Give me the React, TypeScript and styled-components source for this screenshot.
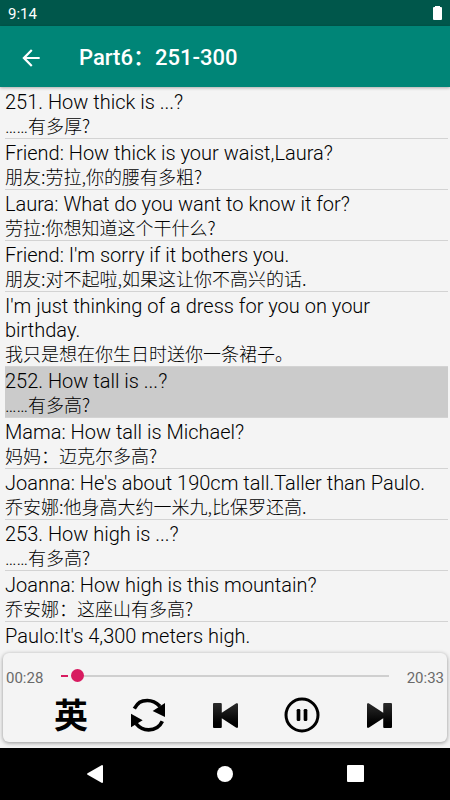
import React, { useState } from "react";
import styled, { createGlobalStyle } from "styled-components";

const GlobalStyle = createGlobalStyle`
  * { box-sizing: border-box; }
  body {
    margin: 0;
    background: #f4f4f4;
    font-family: Roboto, "Noto Sans CJK SC", sans-serif;
    color: #000;
  }
  button { border: 0; padding: 0; background: none; color: inherit; cursor: pointer; }
  svg { display: block; }
`;

const Screen = styled.div`
  display: flex;
  flex-direction: column;
  height: 100vh;
`;

const StatusBar = styled.div`
  flex: none;
  display: flex;
  align-items: center;
  justify-content: space-between;
  height: 26px;
  padding: 1px 8px 0;
  background: #00574b;
  color: #fff;
  font-size: 15px;
  line-height: 24px;
`;

const AppBar = styled.header`
  flex: none;
  display: flex;
  align-items: center;
  gap: 35px;
  height: 61px;
  padding: 2px 18px 0;
  background: #008577;
  color: #fff;
  box-shadow: 0 1px 3px rgba(0, 0, 0, 0.3);
  z-index: 1;
`;

const BackButton = styled.button`
  width: 26px;
  height: 26px;
`;

const Title = styled.h1`
  margin: 0;
  font-size: 22px;
  line-height: 28px;
  font-weight: 500;
`;

const SentenceList = styled.ul`
  flex: 1;
  min-height: 0;
  margin: 0;
  padding: 1px 2px 0 5px;
  overflow-y: auto;
  list-style: none;
  scrollbar-width: none;
`;

const Sentence = styled.li<{ $active?: boolean }>`
  padding: 2px 0;
  border-bottom: 1px solid #d3d3d3;
  background: ${(p) => (p.$active ? "#cbcbcb" : "transparent")};
`;

const English = styled.p`
  margin: 0;
  font-size: 20px;
  line-height: 24px;
  font-weight: 300;
`;

const Chinese = styled.p`
  margin: 0;
  min-height: 22px;
  font-family: "Noto Sans CJK SC", sans-serif;
  font-size: 18px;
  line-height: 22px;
  font-weight: 300;
`;

const Dots = styled.span`
  font-family: Roboto, sans-serif;
  line-height: 16px;
`;

const Player = styled.section`
  flex: none;
  margin: 2px 3px 6px;
  padding: 11px 3px 9px;
  border-radius: 6px;
  background: #f4f4f4;
  box-shadow: 0 1px 4px rgba(0, 0, 0, 0.4);
`;

const Progress = styled.div`
  display: flex;
  align-items: center;
  justify-content: space-between;
  gap: 18px;
`;

const Time = styled.span`
  flex: none;
  padding-top: 4px;
  font-size: 15px;
  line-height: 20px;
  color: #6a6a6a;
`;

const Seek = styled.input`
  flex: 1;
  min-width: 0;
  height: 22px;
  margin: 0;
  appearance: none;
  background: none;

  &::-webkit-slider-runnable-track {
    height: 2px;
    background: linear-gradient(
      to right,
      #d81b60 0 calc(var(--played) - 3px),
      transparent calc(var(--played) - 3px) var(--played),
      #cfcfcf var(--played)
    );
  }
  &::-webkit-slider-thumb {
    appearance: none;
    width: 13px;
    height: 13px;
    margin-top: -6px;
    border-radius: 50%;
    background: #d81b60;
  }
`;

const Controls = styled.div`
  display: flex;
  justify-content: space-between;
  padding: 9px 47px 0;
`;

const Control = styled.button`
  display: flex;
  align-items: center;
  justify-content: center;
  width: 36px;
  height: 36px;
`;

const LanguageControl = styled(Control)`
  padding-bottom: 3px;
  font-family: "Noto Sans CJK SC", sans-serif;
  font-size: 34px;
  line-height: 33px;
  font-weight: 700;
`;

const NavBar = styled.nav`
  flex: none;
  display: flex;
  align-items: center;
  justify-content: space-around;
  height: 52px;
  padding: 0 30px;
  background: #000;
`;

const NavButton = styled.button`
  width: 18px;
  height: 18px;
`;

const SENTENCES = [
  { en: "251. How thick is ...?", zh: "……有多厚?" },
  { en: "Friend: How thick is your waist,Laura?", zh: "朋友:劳拉,你的腰有多粗?" },
  { en: "Laura: What do you want to know it for?", zh: "劳拉:你想知道这个干什么?" },
  { en: "Friend: I'm sorry if it bothers you.", zh: "朋友:对不起啦,如果这让你不高兴的话." },
  { en: "I'm just thinking of a dress for you on your birthday.", zh: "我只是想在你生日时送你一条裙子。" },
  { en: "252. How tall is ...?", zh: "……有多高?" },
  { en: "Mama: How tall is Michael?", zh: "妈妈：迈克尔多高?" },
  { en: "Joanna: He's about 190cm tall.Taller than Paulo.", zh: "乔安娜:他身高大约一米九,比保罗还高." },
  { en: "253. How high is ...?", zh: "……有多高?" },
  { en: "Joanna: How high is this mountain?", zh: "乔安娜：这座山有多高?" },
  { en: "Paulo:It's 4,300 meters high.", zh: "" },
];

const THUMB = 13;

function Translation({ text }: { text: string }) {
  const dotted = text.startsWith("……");
  return (
    <Chinese lang="zh-CN">
      {dotted && <Dots>……</Dots>}
      {dotted ? text.slice(2) : text}
    </Chinese>
  );
}

function SkipIcon({ id, next }: { id: string; next?: boolean }) {
  return (
    <svg width="25" height="25" viewBox="0 0 74 74" aria-hidden="true">
      <defs>
        <linearGradient id={id} x1="0" y1="0" x2="0" y2="1">
          <stop offset="0" stopColor="#2b2b2b" />
          <stop offset="0.8" stopColor="#000" />
        </linearGradient>
      </defs>
      <path
        fill={`url(#${id})`}
        transform={next ? "matrix(-1 0 0 1 74 0)" : undefined}
        d="M3 0H23Q26 0 26 3V29L69 1Q74-1 74 4V70Q74 75 69 73L26 45V71Q26 74 23 74H3Q0 74 0 71V3Q0 0 3 0Z"
      />
    </svg>
  );
}

export default function App() {
  const [active, setActive] = useState(5);
  const [position, setPosition] = useState(3);
  const played = `calc(${position}% - ${Math.round((THUMB * position) / 100)}px)`;

  return (
    <Screen>
      <GlobalStyle />
      <StatusBar>
        <span>9:14</span>
        <svg width="9" height="15" viewBox="0 0 9 15" aria-label="Battery">
          <path fill="#fff" d="M2 0H7V1H8Q9 1 9 2V13Q9 14 8 14H1Q0 14 0 13V2Q0 1 1 1H2Z" />
        </svg>
      </StatusBar>
      <AppBar>
        <BackButton aria-label="Back">
          <svg width="26" height="26" viewBox="0 0 24 24" aria-hidden="true">
            <path fill="#fff" d="M20 11H7.83l5.59-5.59L12 4l-8 8 8 8 1.41-1.41L7.83 13H20v-2z" />
          </svg>
        </BackButton>
        <Title>Part6：251-300</Title>
      </AppBar>
      <SentenceList>
        {SENTENCES.map((s, i) => (
          <Sentence key={i} $active={i === active} onClick={() => setActive(i)}>
            <English>{s.en}</English>
            <Translation text={s.zh} />
          </Sentence>
        ))}
      </SentenceList>
      <Player>
        <Progress>
          <Time>00:28</Time>
          <Seek
            type="range"
            min={0}
            max={100}
            value={position}
            aria-label="Playback position"
            onChange={(e) => setPosition(Number(e.target.value))}
            style={{ "--played": played } as React.CSSProperties}
          />
          <Time>20:33</Time>
        </Progress>
        <Controls>
          <LanguageControl>英</LanguageControl>
          <Control aria-label="Repeat">
            <svg width="36" height="36" viewBox="0 0 108 108" aria-hidden="true">
              <g fill="none" stroke="#000" strokeWidth="11">
                <path d="M13 35C24 17 32 10.5 52 10.5C68 10.5 78 16 90 28" />
                <path d="M97 73C88 92 76 98.5 56 98.5C38 98.5 28 92 18 80" />
              </g>
              <path d="M105 18V60L68 42ZM3 50V91L38 70Z" />
            </svg>
          </Control>
          <Control aria-label="Previous">
            <SkipIcon id="prev-shade" />
          </Control>
          <Control aria-label="Pause">
            <svg width="36" height="36" viewBox="0 0 108 108" aria-hidden="true">
              <circle cx="54" cy="54" r="48" fill="none" stroke="#000" strokeWidth="9" />
              <rect x="38" y="36" width="11" height="36" rx="4" />
              <rect x="59" y="36" width="11" height="36" rx="4" />
            </svg>
          </Control>
          <Control aria-label="Next">
            <SkipIcon id="next-shade" next />
          </Control>
        </Controls>
      </Player>
      <NavBar>
        <NavButton aria-label="Back">
          <svg width="18" height="18" viewBox="0 0 18 18" aria-hidden="true">
            <path fill="#fff" d="M16 0Q17 0 17 1V17Q17 18 16 18L2 10Q0 9 2 8Z" />
          </svg>
        </NavButton>
        <NavButton aria-label="Home">
          <svg width="18" height="18" viewBox="0 0 18 18" aria-hidden="true">
            <circle cx="9" cy="9" r="8" fill="#fff" />
          </svg>
        </NavButton>
        <NavButton aria-label="Recents">
          <svg width="18" height="18" viewBox="0 0 18 18" aria-hidden="true">
            <rect x="1" width="17" height="17" rx="1" fill="#fff" />
          </svg>
        </NavButton>
      </NavBar>
    </Screen>
  );
}
